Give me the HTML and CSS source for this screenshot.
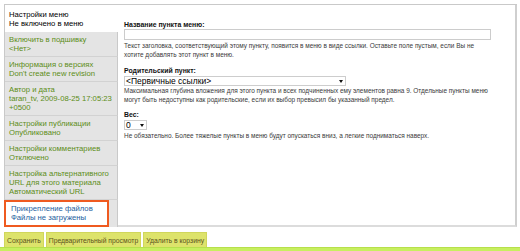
FILE: index.html
```html
<!DOCTYPE html>
<html lang="ru">
<head>
<meta charset="utf-8">
<title>Настройки меню</title>
<link rel="stylesheet" href="styles.css">
</head>
<body>
<div class="page">
  <div class="edit">
    <ul class="tabs">
      <li class="tab tab-active">
        <span class="tab-title">Настройки меню</span>
        <span class="tab-summary">Не включено в меню</span>
      </li>
      <li class="tab">
        <a class="tab-link" href="#"><span class="tab-title">Включить в подшивку</span><span class="tab-summary">&lt;Нет&gt;</span></a>
      </li>
      <li class="tab">
        <a class="tab-link" href="#"><span class="tab-title">Информация о версиях</span><span class="tab-summary">Don't create new revision</span></a>
      </li>
      <li class="tab">
        <a class="tab-link" href="#"><span class="tab-title">Автор и дата</span><span class="tab-summary">taran_tv, 2009-08-25 17:05:23</span><span class="tab-summary">+0500</span></a>
      </li>
      <li class="tab">
        <a class="tab-link" href="#"><span class="tab-title">Настройки публикации</span><span class="tab-summary">Опубликовано</span></a>
      </li>
      <li class="tab">
        <a class="tab-link" href="#"><span class="tab-title">Настройки комментариев</span><span class="tab-summary">Отключено</span></a>
      </li>
      <li class="tab">
        <a class="tab-link" href="#"><span class="tab-title">Настройка альтернативного</span><span class="tab-title">URL для этого материала</span><span class="tab-summary">Автоматический URL</span></a>
      </li>
      <li class="tab tab-last">
        <a class="tab-focus" href="#"><span class="tab-title">Прикрепление файлов</span><span class="tab-summary">Файлы не загружены</span></a>
      </li>
    </ul>
    <div class="pane">
      <div class="field field-title">
        <label class="field-label">Название пункта меню:</label>
        <input class="text-input" type="text">
        <div class="description">Текст заголовка, соответствующий этому пункту, появится в меню в виде ссылки. Оставьте поле пустым, если Вы не<br>хотите добавлять этот пункт в меню.</div>
      </div>
      <div class="field field-parent">
        <label class="field-label">Родительский пункт:</label>
        <div class="select select-parent"><span class="select-value">&lt;Первичные ссылки&gt;</span><span class="select-arrow"></span></div>
        <div class="description">Максимальная глубина вложения для этого пункта и всех подчиненных ему элементов равна 9. Отдельные пункты меню<br>могут быть недоступны как родительские, если их выбор превысил бы указанный предел.</div>
      </div>
      <div class="field field-weight">
        <label class="field-label">Вес:</label>
        <div class="select select-weight"><span class="select-value">0</span><span class="select-arrow"></span></div>
        <div class="description">Не обязательно. Более тяжелые пункты в меню будут опускаться вниз, а легкие подниматься наверх.</div>
      </div>
    </div>
  </div>
  <div class="actions">
    <button class="btn" type="button">Сохранить</button>
    <button class="btn" type="button">Предварительный просмотр</button>
    <button class="btn" type="button">Удалить в корзину</button>
  </div>
</div>
<div class="bottom-bar"></div>
</body>
</html>
```

FILE: styles.css
```css
html, body {
  margin: 0;
  padding: 0;
  background: #ffffff;
}

body {
  font-family: "Liberation Sans", Arial, sans-serif;
  color: #000;
  width: 520px;
  height: 251px;
  overflow: hidden;
  display: flex;
  flex-direction: column;
}

.page {
  padding: 4px 3px 0 4px;
  flex: 1;
}

.edit {
  display: flex;
  border-top: 1px solid #c9c9c9;
  height: 222px;
}

/* vertical tabs */
.tabs {
  list-style: none;
  margin: 0;
  padding: 0;
  width: 113px;
  flex: none;
  border-left: 1px solid #c9c9c9;
  display: flex;
  flex-direction: column;
}

.tab {
  background: #e4e4e4;
  border-right: 1px solid #c9c9c9;
  border-bottom: 1px solid #d2d2d2;
  padding: 3px 4px 3px 4px;
  font-size: 7.7px;
  line-height: 9px;
  white-space: nowrap;
}

.tab-active {
  background: #ffffff;
  border-right: none;
  border-bottom: none;
  padding-top: 5px;
  padding-bottom: 4px;
  color: #000;
}

.tab-link {
  display: block;
  color: #5c8d17;
  text-decoration: none;
}

.tab-title,
.tab-summary {
  display: block;
}

.tab-last {
  padding: 0;
  border-bottom: none;
  flex: 1;
}

.tab-focus {
  display: block;
  margin-left: -1px;
  margin-right: 8px;
  height: 27px;
  box-sizing: border-box;
  border: 2px solid #ef5a20;
  background: #ffffff;
  padding: 2px 0 0 5px;
  color: #1c5e9e;
  text-decoration: none;
}

/* content pane */
.pane {
  flex: 1;
  border-right: 2px solid #cfcfcf;
  border-bottom: 2px solid #dcdcdc;
  padding: 15px 0 0 6px;
}

.field-label {
  display: block;
  font-size: 6.9px;
  font-weight: bold;
  line-height: 9px;
  color: #111;
}

.field-parent {
  margin-top: 7px;
}

.field-weight {
  margin-top: 6px;
}

.text-input {
  display: block;
  box-sizing: border-box;
  width: 367px;
  height: 11px;
  margin: 0;
  padding: 0;
  border: 1px solid #cccccc;
  background: #fff;
}

.description {
  font-size: 6.45px;
  line-height: 9px;
  color: #3a3a3a;
  margin-top: 1px;
  white-space: nowrap;
}

.field-parent .description {
  margin-top: 0;
}

.select {
  box-sizing: border-box;
  height: 10px;
  margin-top: 1px;
  border: 1px solid #cdcdcd;
  background: #fff;
  display: flex;
  align-items: center;
  justify-content: space-between;
  padding: 0 2px 0 1px;
}

.select-parent {
  width: 222px;
}

.select-weight {
  width: 23px;
}

.select-value {
  font-size: 8.5px;
  line-height: 8px;
  color: #000;
}

.select-arrow {
  width: 0;
  height: 0;
  border-left: 2.5px solid transparent;
  border-right: 2.5px solid transparent;
  border-top: 3px solid #111;
}

/* buttons */
.actions {
  display: flex;
  gap: 2px;
  margin-top: 5px;
}

.btn {
  font-family: "Liberation Sans", Arial, sans-serif;
  font-size: 6.8px;
  height: 15px;
  line-height: 13px;
  padding: 0 2px;
  margin: 0;
  background: #dde36b;
  border: 1px solid #d0d65c;
  border-bottom: none;
  color: #5b5220;
}

.bottom-bar {
  height: 3px;
  background: #c7ef5f;
  border-top: 1px solid #b7e04c;
  flex: none;
}
```
